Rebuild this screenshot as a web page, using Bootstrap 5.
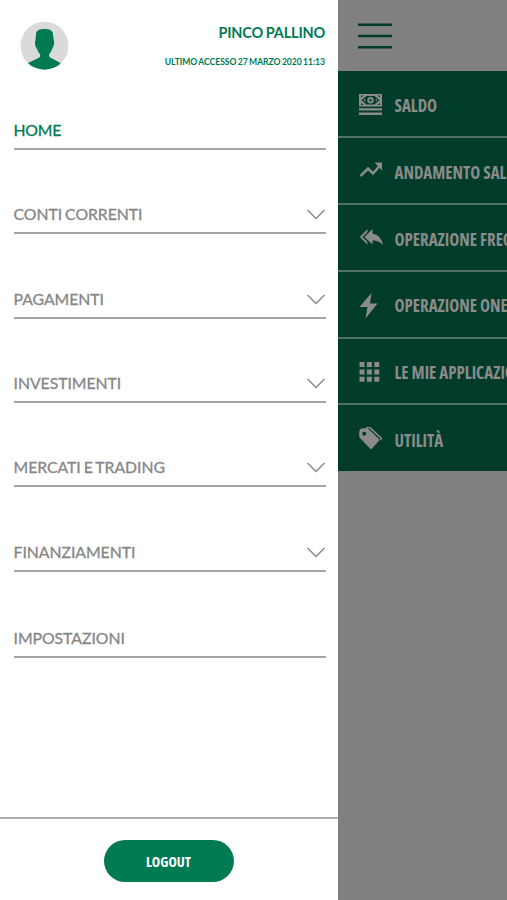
<!DOCTYPE html>
<html lang="it">
<head>
<meta charset="utf-8">
<meta name="viewport" content="width=device-width, initial-scale=1">
<title>Menu</title>
<link href="https://cdn.jsdelivr.net/npm/bootstrap@5.3.0/dist/css/bootstrap.min.css" rel="stylesheet">
<style>
  body { font-family: Lato, sans-serif; color: #868686; }
  .drawer { width: 338px; }
  .profile { height: 91px; padding: 21px 13px 0 20px; color: #007a53; }
  .user-name { font-size: 14.5px; line-height: 20px; padding-top: 2px; letter-spacing: -.2px; word-spacing: -.5px; }
  .last-access { font-size: 8.6px; line-height: 12px; margin-top: 13px; letter-spacing: -.05px; word-spacing: -.6px; }
  .menu-list { margin: 0 12px 0 13.5px; }
  .menu-row { height: 84.3px; border-bottom: 2px solid #a5a5a5; padding-bottom: 8px; font-size: 15.8px; line-height: 20px; letter-spacing: -.04px; word-spacing: -1px; font-weight: 400; -webkit-text-stroke: .3px currentColor; }
  .menu-row svg { position: relative; top: 1px; }
  .menu-row.first { height: 59px; color: #007a53; letter-spacing: -.2px; }
  .menu-row.tall { height: 85.3px; }
  .foot { height: 83px; border-top: 2px solid #adadad; padding-top: 21px; }
  .logout { width: 130px; height: 42px; background: #007a53; }
  .cond { font-family: "Open Sans", sans-serif; font-weight: 700; font-stretch: 75%; white-space: nowrap; }
  .logout .cond { font-size: 14.2px; margin-right: 1px; }
  .behind { background: #808080; }
  .topbar { height: 71px; padding: 23px 0 0 20px; }
  .op { height: 66.9px; background: #003c29; border-bottom: 2px solid #527064; padding: 4px 0 0 20px; color: #8b8b8b; font-size: 16.9px; }
  .op:last-child { border-bottom: 0; height: 65.5px; }
  .op svg { width: 26px; height: 26px; margin-right: 10.5px; flex-shrink: 0; }
</style>
</head>
<body>
<div class="d-flex vh-100 overflow-hidden">
  <aside class="drawer d-flex flex-column flex-shrink-0 bg-white">
    <div class="profile d-flex justify-content-between align-items-start">
      <svg width="49" height="49" viewBox="0 0 49 49"><defs><clipPath id="disc"><circle cx="24.5" cy="24.7" r="24"/></clipPath></defs><circle cx="24.5" cy="24.7" r="24" fill="#dadada"/><path clip-path="url(#disc)" fill="#007a53" d="M16 14C15.500 9 20 8 24.500 8S33.500 9 33 14L34.200 21.500Q34.200 25 32.500 27Q31 31.500 29 33.500Q29 36 31 37L40.500 42V49H8V42L18.500 37Q20.500 36 20.200 33.500Q18 31 16.500 27Q14.800 25 15 21.500Z"/></svg>
      <div class="text-end fw-bold">
        <div class="user-name">PINCO PALLINO</div>
        <div class="last-access">ULTIMO ACCESSO 27 MARZO 2020 11:13</div>
      </div>
    </div>
    <nav class="menu-list d-flex flex-column flex-grow-1">
      <div class="menu-row first d-flex align-items-end"><span>HOME</span></div>
      <div class="menu-row d-flex align-items-end justify-content-between"><span>CONTI CORRENTI</span><svg width="20" height="20" viewBox="0 0 20 20" fill="none" stroke="#8b8b8b" stroke-width="1.5"><path d="M1.500 5L10 13.500L18.500 5"/></svg></div>
      <div class="menu-row d-flex align-items-end justify-content-between"><span>PAGAMENTI</span><svg width="20" height="20" viewBox="0 0 20 20" fill="none" stroke="#8b8b8b" stroke-width="1.5"><path d="M1.500 5L10 13.500L18.500 5"/></svg></div>
      <div class="menu-row d-flex align-items-end justify-content-between"><span>INVESTIMENTI</span><svg width="20" height="20" viewBox="0 0 20 20" fill="none" stroke="#8b8b8b" stroke-width="1.5"><path d="M1.500 5L10 13.500L18.500 5"/></svg></div>
      <div class="menu-row d-flex align-items-end justify-content-between"><span>MERCATI E TRADING</span><svg width="20" height="20" viewBox="0 0 20 20" fill="none" stroke="#8b8b8b" stroke-width="1.5"><path d="M1.500 5L10 13.500L18.500 5"/></svg></div>
      <div class="menu-row tall d-flex align-items-end justify-content-between"><span>FINANZIAMENTI</span><svg width="20" height="20" viewBox="0 0 20 20" fill="none" stroke="#8b8b8b" stroke-width="1.5"><path d="M1.500 5L10 13.500L18.500 5"/></svg></div>
      <div class="menu-row tall d-flex align-items-end"><span>IMPOSTAZIONI</span></div>
    </nav>
    <div class="foot d-flex justify-content-center align-items-start">
      <button class="logout btn rounded-pill border-0 p-0 text-white"><span class="cond">LOGOUT</span></button>
    </div>
  </aside>
  <main class="behind flex-grow-1 overflow-hidden">
    <div class="topbar"><svg class="d-block" width="34" height="27" viewBox="0 0 34 27" stroke="#003c29" stroke-width="2.6"><path d="M0 1.700H34M0 13H34M0 24.300H34"/></svg></div>
    <div class="op d-flex align-items-center"><svg viewBox="0 0 26 26" fill="#8b8b8b"><path fill-rule="evenodd" d="M1 2H24V14.500H1ZM3 3.500V5.500L5.500 3.500ZM22 3.500H19.500L22 5.500ZM3 13H5.500L3 11ZM22 13V11L19.500 13ZM8.500 4L3.500 8.200L8.500 12.500H16.500L21.500 8.200L16.500 4Z"/><circle cx="12.500" cy="8.200" r="3.200"/><circle cx="12.500" cy="8.200" r="1.200" fill="#003c29"/><path d="M8 8.200L6 7V9.500ZM17 8.200L19 7V9.500ZM1 16.300H24V18.600H1ZM1 20.500H24V23H1Z"/></svg><span class="cond">SALDO</span></div>
    <div class="op d-flex align-items-center"><svg viewBox="0 0 26 26"><path fill="none" stroke="#8b8b8b" stroke-width="2.5" d="M2.500 17L10 9.500L15 14.500L22 6.500"/><path fill="#8b8b8b" d="M16.500 3.500H24V11.500Z"/></svg><span class="cond">ANDAMENTO SALDO</span></div>
    <div class="op d-flex align-items-center"><svg viewBox="0 0 26 26" fill="#8b8b8b"><path d="M9.500 3V6L4.500 11L9.500 16V18.500L1.800 11ZM14.500 3V7.500Q23 9 25 19Q20.500 14 14.500 14.500V18.500L6.500 11Z"/></svg><span class="cond">OPERAZIONE FREQUENTE</span></div>
    <div class="op d-flex align-items-center"><svg viewBox="0 0 26 26" fill="#8b8b8b"><path d="M13.500 0L1.500 14H9.500L7.500 25.500L19.500 10.500H12Z"/></svg><span class="cond">OPERAZIONE ONE CLICK</span></div>
    <div class="op d-flex align-items-center"><svg viewBox="0 0 26 26" fill="#8b8b8b"><path d="M1.500 2h5v5h-5zM8.900 2h5v5h-5zM16.300 2h5v5h-5zM1.500 9.400h5v5h-5zM8.900 9.400h5v5h-5zM16.300 9.400h5v5h-5zM1.500 16.800h5v5h-5zM8.900 16.800h5v5h-5zM16.300 16.800h5v5h-5z"/></svg><span class="cond">LE MIE APPLICAZIONI</span></div>
    <div class="op d-flex align-items-center"><svg viewBox="0 0 26 26"><g transform="translate(0 -1.5)"><path fill="#8b8b8b" fill-rule="evenodd" d="M3.500 3L9.500 2.500L21 13.500Q21.800 14.300 21 15.200L14 23Q13 24 12 23L1.500 12Q.800 8 1.500 5Q2 3.300 3.500 3ZM6.200 6.200A2 2 0 1 0 6.200 10.200A2 2 0 1 0 6.200 6.200Z"/><path fill="none" stroke="#8b8b8b" stroke-width="1.600" d="M8 1.800L11.500 1.800L23 12.500Q23.500 13.500 22.500 14.500"/></g></svg><span class="cond ms-0 ps-0">UTILITÀ</span></div>
  </main>
</div>
<script src="https://cdn.jsdelivr.net/npm/bootstrap@5.3.0/dist/js/bootstrap.bundle.min.js"></script>
</body>
</html>
